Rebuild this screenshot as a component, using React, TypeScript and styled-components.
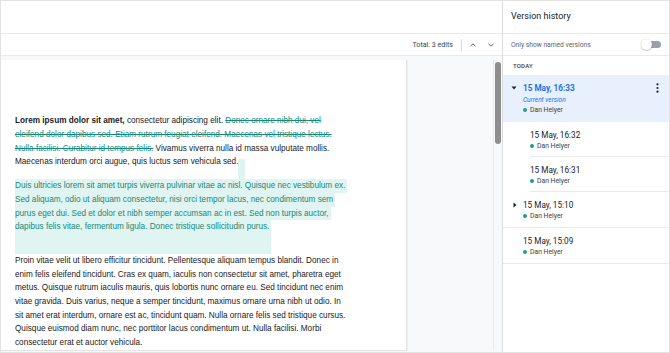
import React from 'react';
import styled, { createGlobalStyle } from 'styled-components';

const Global = createGlobalStyle`
  html, body { margin: 0; padding: 0; background: #fff; }
  body { width: 670px; height: 353px; overflow: hidden; }
  #root { width: 670px; height: 353px; }
`;

const Frame = styled.div`
  box-sizing: border-box;
  width: 670px;
  height: 353px;
  border: 1px solid #e3e3e3;
  display: grid;
  grid-template-columns: 501px 1fr;
  overflow: hidden;
  font-family: Roboto, "Liberation Sans", sans-serif;
`;

const LeftCol = styled.div`
  display: flex;
  flex-direction: column;
  min-height: 0;
`;

const TopBar = styled.div`
  box-sizing: border-box;
  height: 33px;
  flex: none;
  border-bottom: 1px solid #e8eaed;
`;

const Toolbar = styled.div`
  box-sizing: border-box;
  height: 22px;
  flex: none;
  border-bottom: 1px solid #e8eaed;
  display: flex;
  align-items: center;
  justify-content: flex-end;
  padding-right: 2.5px;
`;

const Total = styled.span`
  font-size: 7.1px;
  color: #3c4043;
  margin-right: 8px;
`;

const VDivider = styled.span`
  width: 1px;
  height: 12px;
  background: #dadce0;
  margin-right: 1.5px;
`;

const IconBtn = styled.span`
  width: 18px;
  height: 18px;
  display: flex;
  align-items: center;
  justify-content: center;
`;

const DocArea = styled.div`
  flex: 1;
  min-height: 0;
  display: flex;
  background: #f8f9fa;
  padding-top: 4px;
  padding-bottom: 1px;
`;

const Page = styled.div`
  box-sizing: border-box;
  width: 406px;
  flex: none;
  background: #fff;
  border-right: 1px solid #e3e3e3;
  border-bottom: 1px solid #e3e3e3;
  box-shadow: 1px 0 1px rgba(0, 0, 0, 0.04);
  padding: 54.3px 0 0 14px;
  overflow: hidden;
  font-family: "Liberation Sans", Arial, sans-serif;
  font-size: 8.2px;
  line-height: 13.7px;
  color: #202124;
`;

const Gutter = styled.div`
  flex: 1;
`;

const ScrollTrack = styled.div`
  width: 8px;
  flex: none;
  border-left: 1px solid #e8eaed;
  padding-top: 2px;
`;

const Thumb = styled.div`
  width: 6px;
  height: 82px;
  margin-left: 1px;
  border-radius: 3px;
  background: #8e8e8e;
`;

const Para = styled.div<{ $gap?: number }>`
  margin-top: ${(p) => p.$gap ?? 0}px;
`;

const Line = styled.div<{ $hl?: boolean; $tail?: number }>`
  white-space: nowrap;
  width: fit-content;
  padding-right: ${(p) => (p.$hl ? 2 : 0)}px;
  padding-bottom: ${(p) => p.$tail ?? 0}px;
  background: ${(p) => (p.$hl ? '#e0f4f1' : 'transparent')};
  color: ${(p) => (p.$hl ? '#18897a' : 'inherit')};
`;

const Strong = styled.b`
  font-weight: 700;
`;

const Deleted = styled.span`
  color: #18897a;
  text-decoration: line-through;
`;

const InsertMark = styled.span`
  display: inline-block;
  position: relative;
  width: 7px;
  height: 9.7px;
  margin-top: 4px;
  vertical-align: top;
  background: #e0f4f1;
  &::after {
    content: '';
    position: absolute;
    left: 0;
    top: 100%;
    width: 100%;
    height: 10.5px;
    background: #e0f4f1;
  }
`;

const Panel = styled.div`
  border-left: 1px solid #dadce0;
  display: flex;
  flex-direction: column;
  min-height: 0;
`;

const PanelHeader = styled.div`
  box-sizing: border-box;
  height: 33px;
  border-bottom: 1px solid #e8eaed;
  display: flex;
  align-items: center;
  padding: 0 0 3px 8px;
  font-size: 9px;
  color: #202124;
`;

const FilterRow = styled.div`
  box-sizing: border-box;
  height: 22px;
  border-bottom: 1px solid #e8eaed;
  display: flex;
  align-items: center;
  justify-content: space-between;
  padding: 0 8px;
  font-size: 6.7px;
  color: #5f6368;
`;

const Toggle = styled.span`
  position: relative;
  width: 20px;
  height: 11px;
  flex: none;
`;

const Track = styled.span`
  position: absolute;
  left: 4px;
  top: 2px;
  width: 16px;
  height: 7px;
  border-radius: 4px;
  background: #9aa0a6;
`;

const Knob = styled.span`
  position: absolute;
  left: 0;
  top: 0;
  width: 11px;
  height: 11px;
  border-radius: 50%;
  background: #fff;
  box-shadow: 0 0.5px 1.5px rgba(0, 0, 0, 0.4);
`;

const DayLabel = styled.div`
  height: 19px;
  display: flex;
  align-items: center;
  padding-left: 10px;
  font-size: 6px;
  font-weight: 500;
  letter-spacing: 0.2px;
  color: #3c4043;
`;

const Row = styled.div<{ $selected?: boolean; $full?: boolean }>`
  display: flex;
  padding-left: 8px;
  background: ${(p) => (p.$selected ? '#e8f0fe' : '#fff')};
  border-bottom: ${(p) => (p.$full ? '1px solid #e8eaed' : 'none')};
`;

const CaretSlot = styled.span`
  width: 12px;
  flex: none;
  height: 10px;
  margin-top: 8px;
  display: flex;
  align-items: center;
`;

const Body = styled.div<{ $indent?: boolean; $selected?: boolean }>`
  flex: 1;
  display: flex;
  flex-direction: column;
  margin-left: ${(p) => (p.$indent ? 7 : 0)}px;
  padding-top: 8px;
  padding-bottom: ${(p) => (p.$selected ? 7 : p.$indent ? 5 : 6)}px;
  border-bottom: ${(p) => (p.$indent ? '1px solid #e8eaed' : 'none')};
`;

const Title = styled.div<{ $selected?: boolean }>`
  height: 10px;
  line-height: 10px;
  font-size: 8.2px;
  font-weight: ${(p) => (p.$selected ? 700 : 400)};
  color: ${(p) => (p.$selected ? '#1a73e8' : '#202124')};
  white-space: nowrap;
`;

const Current = styled.div`
  margin-top: 2px;
  height: 10px;
  line-height: 10px;
  font-size: 6.5px;
  font-style: italic;
  color: #1a73e8;
`;

const Author = styled.div<{ $selected?: boolean }>`
  margin-top: ${(p) => (p.$selected ? 0 : 1)}px;
  height: 10px;
  display: flex;
  align-items: center;
  gap: 3px;
  font-size: 6.8px;
  color: #3c4043;
  white-space: nowrap;
`;

const Dot = styled.span`
  width: 4px;
  height: 4px;
  border-radius: 50%;
  background: #1e9e8e;
  flex: none;
`;

const Menu = styled.span`
  width: 12px;
  flex: none;
  margin-right: 6px;
  margin-top: 6px;
  height: 14px;
  display: flex;
  align-items: center;
  justify-content: center;
`;

const ChevronUp = () => (
  <svg width="8" height="6" viewBox="0 0 8 6">
    <polyline points="1.5,4.2 4,1.8 6.5,4.2" fill="none" stroke="#5f6368" strokeWidth="1" />
  </svg>
);
const ChevronDown = () => (
  <svg width="8" height="6" viewBox="0 0 8 6">
    <polyline points="1.5,1.8 4,4.2 6.5,1.8" fill="none" stroke="#5f6368" strokeWidth="1" />
  </svg>
);
const CaretDown = () => (
  <svg width="6" height="4" viewBox="0 0 6 4">
    <polygon points="0.5,0.5 5.5,0.5 3,3.5" fill="#202124" />
  </svg>
);
const CaretRight = () => (
  <svg width="6" height="6" viewBox="0 0 6 6" style={{ marginLeft: 1.5 }}>
    <polygon points="0.5,0.5 3.5,3 0.5,5.5" fill="#202124" />
  </svg>
);
const Dots = () => (
  <svg width="3" height="10" viewBox="0 0 3 10">
    <circle cx="1.5" cy="1.3" r="1.1" fill="#202124" />
    <circle cx="1.5" cy="5" r="1.1" fill="#202124" />
    <circle cx="1.5" cy="8.7" r="1.1" fill="#202124" />
  </svg>
);

type Version = {
  time: string;
  caret?: 'down' | 'right';
  selected?: boolean;
  indent?: boolean;
};

const versions: Version[] = [
  { time: '15 May, 16:33', caret: 'down', selected: true },
  { time: '15 May, 16:32', indent: true },
  { time: '15 May, 16:31', indent: true },
  { time: '15 May, 15:10', caret: 'right' },
  { time: '15 May, 15:09' },
];

const VersionRow = ({ v }: { v: Version }) => (
  <Row $selected={v.selected} $full={!v.indent && !v.selected}>
    <CaretSlot>
      {v.caret === 'down' && <CaretDown />}
      {v.caret === 'right' && <CaretRight />}
    </CaretSlot>
    <Body $indent={v.indent} $selected={v.selected}>
      <Title $selected={v.selected}>{v.time}</Title>
      {v.selected && <Current>Current version</Current>}
      <Author $selected={v.selected}>
        <Dot />
        Dan Helyer
      </Author>
    </Body>
    {v.selected && (
      <Menu>
        <Dots />
      </Menu>
    )}
  </Row>
);

const highlighted = [
  'Duis ultricies lorem sit amet turpis viverra pulvinar vitae ac nisl. Quisque nec vestibulum ex.',
  'Sed aliquam, odio ut aliquam consectetur, nisi orci tempor lacus, nec condimentum sem',
  'purus eget dui. Sed et dolor et nibh semper accumsan ac in est. Sed non turpis auctor,',
  'dapibus felis vitae, fermentum ligula. Donec tristique sollicitudin purus.',
];

const closing = [
  'Proin vitae velit ut libero efficitur tincidunt. Pellentesque aliquam tempus blandit. Donec in',
  'enim felis eleifend tincidunt. Cras ex quam, iaculis non consectetur sit amet, pharetra eget',
  'metus. Quisque rutrum iaculis mauris, quis lobortis nunc ornare eu. Sed tincidunt nec enim',
  'vitae gravida. Duis varius, neque a semper tincidunt, maximus ornare urna nibh ut odio. In',
  'sit amet erat interdum, ornare est ac, tincidunt quam. Nulla ornare felis sed tristique cursus.',
  'Quisque euismod diam nunc, nec porttitor lacus condimentum ut. Nulla facilisi. Morbi',
  'consectetur erat et auctor vehicula.',
];

export default function App() {
  return (
    <>
      <Global />
      <Frame>
        <LeftCol>
          <TopBar />
          <Toolbar>
            <Total>Total: 3 edits</Total>
            <VDivider />
            <IconBtn>
              <ChevronUp />
            </IconBtn>
            <IconBtn>
              <ChevronDown />
            </IconBtn>
          </Toolbar>
          <DocArea>
            <Page>
              <Para>
                <Line>
                  <Strong>Lorem ipsum dolor sit amet,</Strong> consectetur adipiscing elit.{' '}
                  <Deleted>Donec ornare nibh dui, vel</Deleted>
                </Line>
                <Line>
                  <Deleted>eleifend dolor dapibus sed. Etiam rutrum feugiat eleifend. Maecenas vel tristique lectus.</Deleted>
                </Line>
                <Line>
                  <Deleted>Nulla facilisi. Curabitur id tempus felis.</Deleted> Vivamus viverra nulla id massa vulputate mollis.
                </Line>
                <Line>
                  Maecenas interdum orci augue, quis luctus sem vehicula sed.
                  <InsertMark />
                </Line>
              </Para>
              <Para $gap={10.2}>
                {highlighted.map((t, i) => (
                  <Line key={i} $hl $tail={i === highlighted.length - 1 ? 19.7 : 0}>
                    {t}
                  </Line>
                ))}
              </Para>
              <Para>
                {closing.map((t, i) => (
                  <Line key={i}>{t}</Line>
                ))}
              </Para>
            </Page>
            <Gutter />
            <ScrollTrack>
              <Thumb />
            </ScrollTrack>
          </DocArea>
        </LeftCol>
        <Panel>
          <PanelHeader>Version history</PanelHeader>
          <FilterRow>
            Only show named versions
            <Toggle>
              <Track />
              <Knob />
            </Toggle>
          </FilterRow>
          <DayLabel>TODAY</DayLabel>
          {versions.map((v) => (
            <VersionRow key={v.time} v={v} />
          ))}
        </Panel>
      </Frame>
    </>
  );
}
